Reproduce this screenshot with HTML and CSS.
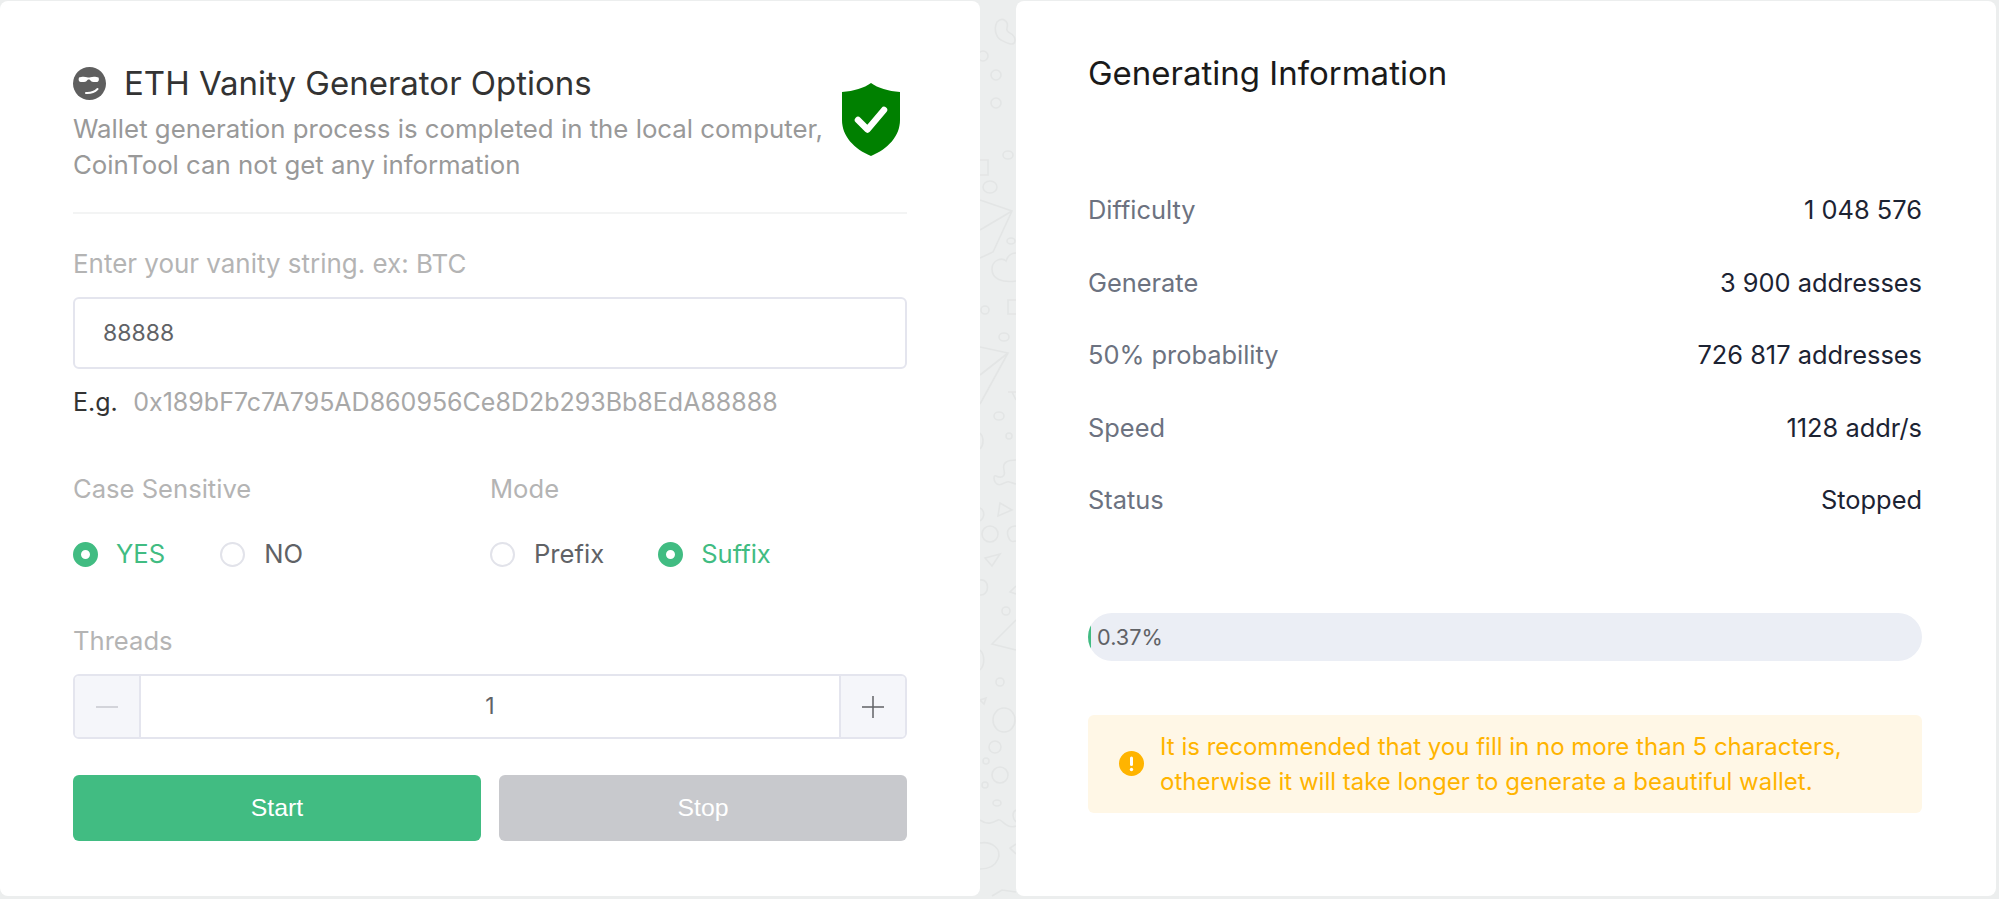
FILE: index.html
```html
<!DOCTYPE html>
<html lang="en">
<head>
<meta charset="utf-8">
<title>ETH Vanity Generator</title>
<link rel="stylesheet" href="styles.css">
</head>
<body>
<svg class="doodles" width="1999" height="899" viewBox="0 0 1999 899" fill="none">
  <g stroke="#e3e5e5" stroke-width="1.6">
    <path d="M997 22c6-6 12 0 10 6s8 4 8 12-10 2-14 0-8-10-4-18z"/>
    <circle cx="996" cy="75" r="5"/><circle cx="996" cy="103" r="5"/><circle cx="983" cy="56" r="5"/>
    <ellipse cx="1008" cy="155" rx="5" ry="4"/><ellipse cx="990" cy="187" rx="7" ry="6"/>
    <path d="M980 160h8v15h-8"/>
    <path d="M980 200l32 11-19 41-13 6M980 230l32-19"/>
    <ellipse cx="1011" cy="241" rx="4" ry="3"/>
    <path d="M1016 281c-14 2-24-2-24-12 0-9 10-12 14-8 2-6 6-8 10-8"/>
    <ellipse cx="985" cy="310" rx="4" ry="4"/>
    <path d="M1016 300h-8v14h8"/>
    <ellipse cx="1004" cy="337" rx="5" ry="4"/>
    <path d="M980 347l28 6-28 51M980 375l28-22"/>
    <path d="M1008 392h8M1012 392l4 8"/>
    <ellipse cx="999" cy="416" rx="5" ry="4"/><ellipse cx="1009" cy="436" rx="3" ry="3"/>
    <path d="M980 433c4 4 4 12 0 16"/>
    <path d="M1016 460c-8 0-14 2-12 10s-4 8-8 6-2 12 6 8 6-2 14 0"/>
    <path d="M1000 503l12 7-14 6z"/>
    <path d="M980 508c5 3 5 9 0 13"/>
    <ellipse cx="990" cy="534" rx="8" ry="8"/>
    <path d="M1016 526c-6 0-10 4-8 10s4 6 8 5"/>
    <path d="M985 558l15-4-8 12z"/>
    <path d="M980 580c10-2 10 16 0 15"/>
    <path d="M1016 586l-6 6 6 2"/>
    <ellipse cx="1006" cy="611" rx="4" ry="4"/>
    <path d="M1016 620l-24 24 24 6"/>
    <path d="M980 650c5 5 5 15 0 20"/>
    <ellipse cx="1000" cy="682" rx="4" ry="4"/>
    <path d="M980 700l6-2-2 6z"/>
    <ellipse cx="1004" cy="720" rx="11" ry="12"/>
    <ellipse cx="995" cy="747" rx="6" ry="6"/><ellipse cx="986" cy="761" rx="3" ry="3"/>
    <ellipse cx="1000" cy="775" rx="8" ry="8"/><ellipse cx="985" cy="785" rx="3" ry="3"/>
    <ellipse cx="997" cy="803" rx="4" ry="3"/>
    <path d="M1016 810c-4 2-4 8 0 12"/>
    <path d="M980 820c8 6 14 2 18 0s8 10 18 6"/>
    <path d="M980 843c12-2 22 6 18 16s-14 10-18 10"/>
    <path d="M1016 844l-6 4 6 6M992 896l10-6 14 2"/>
  </g>
</svg>
<main class="page">
  <section class="card left">
    <header class="head">
      <div class="head-text">
        <h1 class="title">
          <svg class="cool" viewBox="0 0 33 33"><circle cx="16.500" cy="16.500" r="16.500" fill="#5f5f5f"/><path d="M6 10.500c2-1 6-1.200 8-.3 1 .5 2.500.5 3.500 0 2-.9 6-.7 8 .3 1 2.500 0 4.500-2 4.500h-3c-2 0-3-1.500-4-2.500h-1.500c-1 1-2 2.500-4 2.500H8c-2 0-3-2-2-4.500z" fill="#fff"/><path d="M13 26c4.500.3 8.500-1 11.500-4" stroke="#fff" stroke-width="2" fill="none" stroke-linecap="round"/></svg>
          ETH Vanity Generator Options
        </h1>
        <p class="sub">Wallet generation process is completed in the local computer,<br>CoinTool can not get any information</p>
      </div>
      <svg class="shield" viewBox="0 0 58 73"><path d="M29 0c7 5 17 8 29 9v28c0 16-12 29-29 36C12 66 0 53 0 37V9c12-1 22-4 29-9z" fill="#008000"/><path d="M16 37l9.500 9.500L42 27" fill="none" stroke="#fff" stroke-width="6.500" stroke-linecap="round" stroke-linejoin="round"/></svg>
    </header>

    <label class="label first">Enter your vanity string. ex: BTC</label>
    <div class="input">88888</div>
    <p class="eg"><b>E.g.</b><span>0x189bF7c7A795AD860956Ce8D2b293Bb8EdA88888</span></p>

    <div class="opts">
      <div class="opt-col">
        <div class="label">Case Sensitive</div>
        <div class="radios">
          <span class="radio on"><i></i>YES</span>
          <span class="radio"><i></i>NO</span>
        </div>
      </div>
      <div class="opt-col">
        <div class="label">Mode</div>
        <div class="radios mode">
          <span class="radio"><i></i>Prefix</span>
          <span class="radio on"><i></i>Suffix</span>
        </div>
      </div>
    </div>

    <div class="label threads">Threads</div>
    <div class="stepper">
      <span class="step"><svg width="22" height="2"><rect width="22" height="2" fill="#d3d4da"/></svg></span>
      <span class="val">1</span>
      <span class="step"><svg width="22" height="22"><path d="M0 11h22M11 0v22" stroke="#606266" stroke-width="1.500"/></svg></span>
    </div>
    <div class="btns">
      <button class="btn start">Start</button>
      <button class="btn stop">Stop</button>
    </div>
  </section>

  <section class="card right">
    <h2 class="r-title">Generating Information</h2>
    <dl class="rows">
      <div class="row"><dt>Difficulty</dt><dd>1 048 576</dd></div>
      <div class="row"><dt>Generate</dt><dd>3 900 addresses</dd></div>
      <div class="row"><dt>50% probability</dt><dd>726 817 addresses</dd></div>
      <div class="row"><dt>Speed</dt><dd>1128 addr/s</dd></div>
      <div class="row"><dt>Status</dt><dd>Stopped</dd></div>
    </dl>
    <div class="progress"><div class="fill" style="width:0.37%"></div><span>0.37%</span></div>
    <div class="alert">
      <svg class="warn" viewBox="0 0 25 25"><circle cx="12.500" cy="12.500" r="12.500" fill="#ffb400"/><rect x="11" y="5.500" width="3" height="9.500" rx="1.500" fill="#fff"/><circle cx="12.500" cy="18.500" r="1.700" fill="#fff"/></svg>
      <p>It is recommended that you fill in no more than 5 characters,<br>otherwise it will take longer to generate a beautiful wallet.</p>
    </div>
  </section>
</main>
</body>
</html>
```
FILE: styles.css
```css
* { box-sizing: border-box; }
html, body { margin: 0; height: 100%; }
body {
  background: #eceeee;
  font-family: "Inter", "Liberation Sans", sans-serif;
  overflow: hidden;
  position: relative;
}
.doodles { position: absolute; left: 0; top: 0; }
.page {
  position: relative;
  display: flex;
  gap: 36px;
  height: 896px;
  padding: 1px 3px 0 0;
}
.card { background: #fff; border-radius: 8px; }
.left { width: 980px; padding: 66px 73px 0; }
.right { flex: 1; padding: 53px 74px 0 72px; }

.head { position: relative; height: 147px; border-bottom: 2px solid #f3f4f4; }
.title {
  margin: 0;
  display: flex;
  align-items: center;
  gap: 18px;
  font-size: 33px;
  line-height: 33px;
  font-weight: 400;
  color: #333;
}
.cool { width: 33px; height: 33px; flex: none; }
.sub { margin: 11px 0 0; font-size: 25.800px; line-height: 36px; color: #999; }
.shield { position: absolute; left: 769px; top: 16px; width: 58px; height: 73px; }

.label { font-size: 25.600px; line-height: 30px; color: #b4b4b4; }
.first { display: block; margin-top: 35px; font-size: 25.950px; }
.input {
  margin-top: 18px;
  height: 72px;
  border: 2px solid #e4e5ee;
  border-radius: 6px;
  padding-left: 28px;
  font-size: 23px;
  line-height: 68px;
  color: #606266;
}
.eg { margin: 15px 0 0; display: flex; gap: 15.500px; font-size: 25px; line-height: 36px; color: #a8a8a8; }
.eg b { font-weight: 400; color: #333; }

.opts { display: flex; margin-top: 54px; }
.opt-col { width: 418px; }
.radios { display: flex; margin-top: 34px; gap: 55px; }
.radios.mode { gap: 54px; }
.radio { display: flex; align-items: center; gap: 19px; font-size: 25.600px; line-height: 32px; color: #606266; }
.radio.on { gap: 18px; }
.radio i { width: 25px; height: 25px; border-radius: 50%; border: 2px solid #e2e3ea; background: #fff; }
.radio.on { color: #41bc82; }
.radio.on i { border: 8px solid #41bc82; }

.threads { margin-top: 56px; }
.stepper {
  margin-top: 18px;
  height: 65px;
  display: flex;
  border: 2px solid #e4e5ee;
  border-radius: 6px;
  font-size: 23px;
  color: #606266;
  overflow: hidden;
}
.step { width: 64px; background: #f5f6fa; display: flex; align-items: center; justify-content: center; flex: none; }
.val { flex: 1; text-align: center; line-height: 61px; border-left: 2px solid #e4e5ee; border-right: 2px solid #e4e5ee; }
.btns { display: flex; gap: 18px; margin-top: 36px; }
.btn {
  flex: 1;
  height: 66px;
  border: 0;
  border-radius: 6px;
  font: 400 24.800px "Liberation Sans", sans-serif;
  color: #fff;
  padding: 0;
}
.start { background: #41bc82; }
.stop { background: #c8c9cd; }

.r-title { margin: 0; font-size: 33px; line-height: 38px; font-weight: 400; color: #1a1a1a; }
.rows { margin: 100px 0 0; }
.row { display: flex; justify-content: space-between; height: 72.600px; font-size: 25.400px; line-height: 36px; }
.row dt { color: #6c7280; }
.row dd { margin: 0; color: #1c2333; }

.progress {
  position: relative;
  margin-top: 58px;
  height: 48px;
  border-radius: 24px;
  background: #ebeef5;
  overflow: hidden;
  font-size: 21.700px;
  line-height: 48px;
  color: #606266;
}
.fill { position: absolute; left: 0; top: 0; bottom: 0; background: #41bc82; }
.progress span { position: relative; padding-left: 9px; }
.alert {
  margin-top: 54px;
  height: 98px;
  background: #fff7e6;
  border-radius: 6px;
  display: flex;
  align-items: center;
  padding-left: 31px;
  gap: 16px;
  font-size: 24px;
  line-height: 35px;
  color: #ffb400;
}
.alert p { margin: 0; }
.warn { width: 25px; height: 25px; flex: none; }
```
